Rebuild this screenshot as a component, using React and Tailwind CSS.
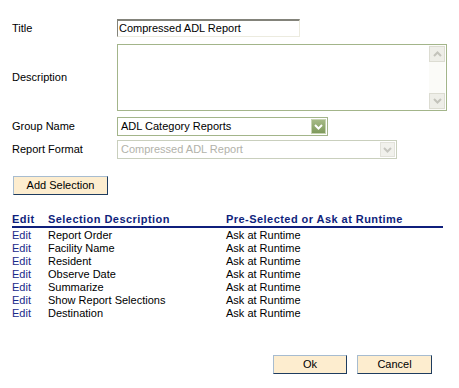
import React from "react";

const rows = [
  "Report Order",
  "Facility Name",
  "Resident",
  "Observe Date",
  "Summarize",
  "Show Report Selections",
  "Destination",
];

const Chevron = ({ color, up }) => (
  <svg width="9" height="6" viewBox="0 0 9 6">
    <path
      d={up ? "M1 5 L4.5 1.5 L8 5" : "M1 1 L4.5 4.5 L8 1"}
      fill="none"
      stroke={color}
      strokeWidth="2"
    />
  </svg>
);

const Select = ({ value, width, disabled }) => (
  <div
    className={`flex items-center h-[19px] border ${
      disabled ? "border-[#c9cfbd]" : "border-[#a3b58a]"
    } bg-white`}
    style={{ width }}
  >
    <span
      className={`flex-1 pl-[3px] leading-none ${
        disabled ? "text-[#b2b2aa]" : "text-black"
      }`}
    >
      {value}
    </span>
    {disabled ? (
      <div className="w-[15px] h-[15px] mr-[1px] flex items-center justify-center bg-[#f1f1ec] border border-[#e2e2da]">
        <Chevron color="#c6c6bf" />
      </div>
    ) : (
      <div className="w-[15px] h-[15px] mr-[1px] flex items-center justify-center bg-gradient-to-b from-[#a6ba86] to-[#7f9a5c] border border-[#c7d4b2]">
        <Chevron color="#ffffff" />
      </div>
    )}
  </div>
);

const Button = ({ children, width }) => (
  <button
    className="h-[19px] bg-[#fdedcf] border border-t-[#a7bcd0] border-l-[#a7bcd0] border-r-[#1e3c5f] border-b-[#1e3c5f] text-black text-[11px] leading-none"
    style={{ width }}
  >
    {children}
  </button>
);

export default function App() {
  return (
    <div
      className="w-[459px] h-[388px] bg-white text-[11px] text-black pt-[19px]"
      style={{ fontFamily: '"Liberation Sans", Arial, sans-serif' }}
    >
      {/* Title */}
      <div className="flex items-center pl-[12px]">
        <div className="w-[105px] pt-[1px]">Title</div>
        <div className="w-[183px] h-[18px] flex items-center bg-white border-t-2 border-l border-t-[#83837a] border-l-[#83837a] border-r border-b border-r-[#ecebdf] border-b-[#ecebdf] pl-[1px] leading-none">
          Compressed ADL Report
        </div>
      </div>

      {/* Description */}
      <div className="flex items-center pl-[12px] mt-[7px]">
        <div className="w-[105px]">Description</div>
        <div className="w-[330px] h-[67px] border border-[#a3b58a] bg-white flex justify-end">
          <div className="w-[16px] flex flex-col justify-between py-[1px] mr-[1px] bg-[#fbfbf8]">
            <div className="h-[16px] flex items-center justify-center bg-[#eeeee8] border border-[#dcdcd2]">
              <Chevron color="#c3c3bb" up />
            </div>
            <div className="h-[16px] flex items-center justify-center bg-[#eeeee8] border border-[#dcdcd2]">
              <Chevron color="#c3c3bb" />
            </div>
          </div>
        </div>
      </div>

      {/* Group Name */}
      <div className="flex items-center pl-[12px] mt-[6px]">
        <div className="w-[105px]">Group Name</div>
        <Select value="ADL Category Reports" width="211px" />
      </div>

      {/* Report Format */}
      <div className="flex items-center pl-[12px] mt-[4px]">
        <div className="w-[105px]">Report Format</div>
        <Select value="Compressed ADL Report" width="280px" disabled />
      </div>

      <div className="pl-[13px] mt-[17px]">
        <Button width="95px">Add Selection</Button>
      </div>

      {/* Selections */}
      <div className="ml-[12px] w-[431px] mt-[18px]">
        <div className="grid grid-cols-[36px_178px_1fr] font-bold text-[#0f1f7c] border-b-2 border-[#0f1f7c] leading-[13px] tracking-[0.45px]">
          <span>Edit</span>
          <span>Selection Description</span>
          <span>Pre-Selected or Ask at Runtime</span>
        </div>
        <div className="pt-[1px]">
          {rows.map((r) => (
            <div key={r} className="grid grid-cols-[36px_178px_1fr] leading-[13px] h-[13px]">
              <span className="text-[#1a2a8a]">Edit</span>
              <span>{r}</span>
              <span>Ask at Runtime</span>
            </div>
          ))}
        </div>
      </div>

      <div className="flex justify-end gap-[10px] pr-[27px] mt-[35px]">
        <Button width="74px">Ok</Button>
        <Button width="75px">Cancel</Button>
      </div>
    </div>
  );
}
